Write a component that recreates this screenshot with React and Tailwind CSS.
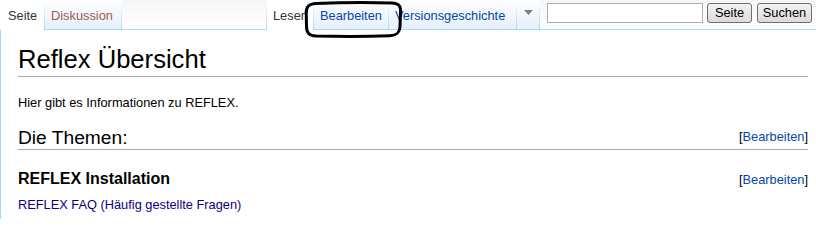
import React from 'react';

const Sep = () => (
  <div className="w-px h-full shrink-0 bg-linear-to-b from-white to-[#a7d7f9]" />
);

function Tab({ label, width, color, selected }) {
  return (
    <div
      className={`${
        selected ? 'bg-white' : 'bg-linear-to-b from-[#fdfeff] to-[#e6f0f9] border-b border-[#a7d7f9]'
      } h-full shrink-0 flex items-center pl-[6px] pt-[2px]`}
      style={{ width }}
    >
      <span className={color}>{label}</span>
    </div>
  );
}

function EditLink() {
  return (
    <span className="text-[12.8px] leading-[16px] font-normal text-black">
      [<span className="text-[#0645ad]">Bearbeiten</span>]
    </span>
  );
}

export default function App() {
  return (
    <div
      className="relative w-[816px] h-[252px] bg-white overflow-hidden text-[12.8px]"
      style={{ fontFamily: '"Liberation Sans", Arial, sans-serif' }}
    >
      {/* Tabs */}
      <div className="flex h-[30px]">
        <div className="w-[44px] h-full bg-white pl-[8px] pt-[2px] flex items-center shrink-0">
          <span className="text-[#333]">Seite</span>
        </div>
        <Sep />
        <Tab label="Diskussion" width={76} color="text-[#a55858]" />
        <Sep />
        <div className="w-[144px] h-full shrink-0 bg-linear-to-b from-[#f6f6f6] to-white border-b border-[#a7d7f9]" />
        <Sep />
        <Tab label="Lesen" width={46} color="text-[#333]" selected />
        <Sep />
        <Tab label="Bearbeiten" width={74} color="text-[#0645ad]" />
        <Sep />
        <Tab label="Versionsgeschichte" width={127} color="text-[#0645ad]" />
        <Sep />
        <div className="w-[22px] h-full shrink-0 bg-linear-to-b from-[#fdfeff] to-[#e6f0f9] border-b border-[#a7d7f9] flex justify-center pt-[10px]">
          <svg width="9" height="5" viewBox="0 0 9 5">
            <path d="M0 0h9L4.5 5z" fill="#7d7d7d" />
          </svg>
        </div>
        <Sep />
        <div className="flex-1 h-full bg-linear-to-b from-[#f6f6f6] to-white border-b border-[#a7d7f9] flex items-start pt-[3px]">
          <div className="ml-[7px] w-[156px] h-[20px] bg-white border border-[#abadb3]" />
          <button className="ml-[4px] w-[45px] h-[20px] rounded-[3px] border border-[#707070] bg-linear-to-b from-[#f2f2f2] to-[#dbdbdb] text-[12.8px] leading-[16px] text-black">
            Seite
          </button>
          <button className="ml-[5px] w-[55px] h-[20px] rounded-[3px] border border-[#707070] bg-linear-to-b from-[#f2f2f2] to-[#dbdbdb] text-[12.8px] leading-[16px] text-black">
            Suchen
          </button>
        </div>
      </div>

      {/* Content */}
      <div className="border-l border-[#a7d7f9] pl-[17px] pr-[8px] pt-[15px] pb-[5px] text-black">
        <h1 className="text-[25.6px] leading-[29px] pb-[2px] border-b border-[#aaaaaa]">Reflex Übersicht</h1>
        <p className="mt-[16px] leading-[19px]">Hier gibt es Informationen zu REFLEX.</p>
        <h2 className="mt-[14px] text-[19.2px] leading-[23px] border-b border-[#aaaaaa] flex justify-between">
          <span>Die Themen:</span>
          <span className="self-start mt-[3px] text-[12.8px] leading-[16px]">
            <EditLink />
          </span>
        </h2>
        <h3 className="mt-[19px] text-[16px] leading-[20px] font-bold flex justify-between items-baseline">
          <span>REFLEX Installation</span>
          <EditLink />
        </h3>
        <p className="mt-[6px] leading-[19px] text-[#0b0080]">REFLEX FAQ (Häufig gestellte Fragen)</p>
      </div>

      {/* Hand-drawn annotation */}
      <svg className="absolute left-[302px] top-0 pointer-events-none" width="104" height="40" viewBox="0 0 104 40">
        <path
          d="M14 3.5 C40 2.5 70 2.5 90 3 C97 3.5 99 6 98.5 12 L98 27 C97.5 33 95 35.5 88 35.8 C65 36.5 35 36.5 14 36 C7 35.5 4.5 33 4.5 26 L4.2 13 C4 6.5 7 3.8 14 3.5 Z"
          fill="none"
          stroke="#000"
          strokeWidth="3"
        />
      </svg>
    </div>
  );
}
